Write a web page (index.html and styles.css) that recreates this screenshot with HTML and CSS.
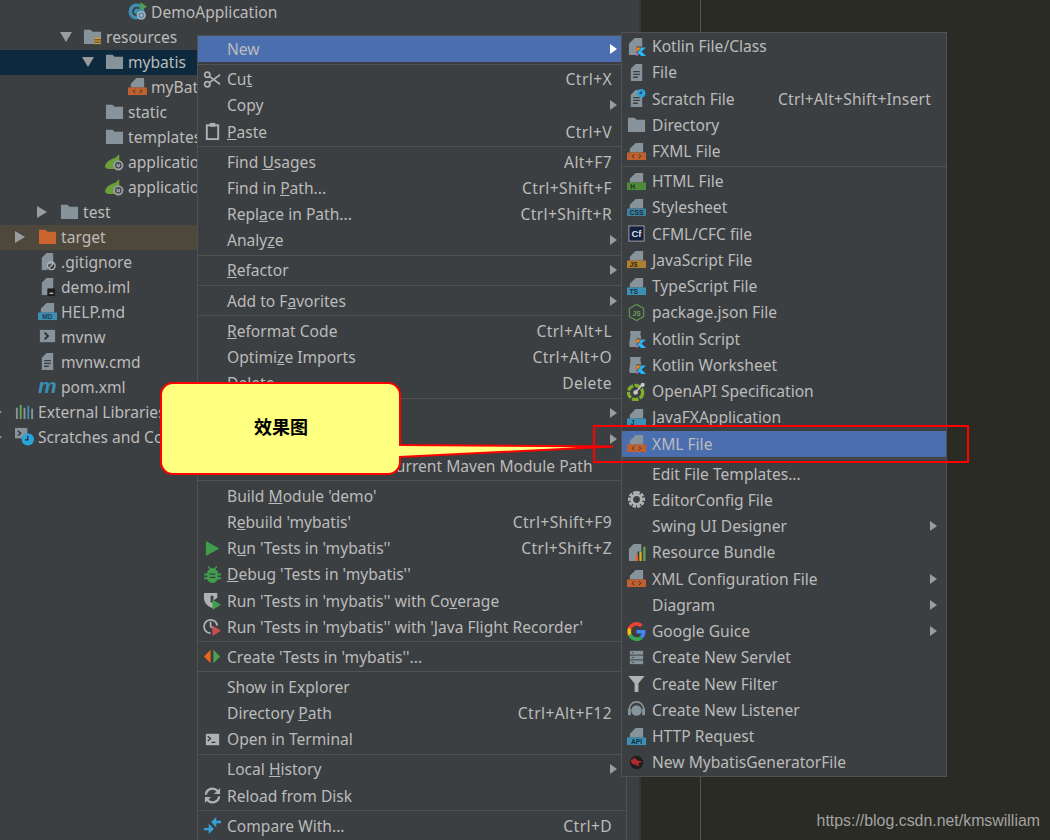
FILE: index.html
```html
<!DOCTYPE html>
<html lang="en">
<head>
    <meta charset="UTF-8">
    <meta name="viewport" content="width=device-width, initial-scale=1.0">
    <title>New XML File</title>
    <link rel="stylesheet" href="styles.css">
</head>
<body>
    <svg class="defs" width="0" height="0">
        <defs>
            <symbol id="folder" viewBox="0 0 20 20"><path fill="#87939a" d="M1 3h7l2 2h9v13H1z"/></symbol>
            <symbol id="page" viewBox="0 0 20 20"><path fill="#87939a" d="M9 1h8v10H3V7z"/></symbol>
            <symbol id="textfile" viewBox="0 0 20 20"><path fill="#87939a" d="M9 1h7v18H4V6z"/><path stroke="#3c3f41" stroke-width="1.400" d="M6.500 9h7M6.500 12h7M6.500 15h5"/></symbol>
            <symbol id="xml" viewBox="0 0 20 20"><use href="#page"/><rect x="0" y="11" width="20" height="8" fill="#c0602f"/><path fill="none" stroke="#2e2e2e" d="M7.500 13l-2 2 2 2M12.500 13l2 2-2 2"/></symbol>
            <symbol id="leaf" viewBox="0 0 20 20"><path fill="#6a9f3a" d="M0 16c0-6 7-9 11-10l4-4v7l-5 9H3z"/><circle cx="14" cy="14" r="5.400" fill="#9a9fa3"/><circle cx="14" cy="14" r="2.800" fill="none" stroke="#3c3f41" stroke-width="1.200"/><path stroke="#3c3f41" d="M14 11v3"/></symbol>
            <symbol id="demo" viewBox="0 0 20 20"><circle cx="9" cy="10" r="8.500" fill="#3d8eb0"/><path fill="none" stroke="#3c3f41" stroke-width="2" d="M12 7a4 4 0 1 0 0 6"/><path fill="#4fa04f" d="M13 0l7 5-7 4z"/><circle cx="14" cy="14" r="4.800" fill="#9ab0bb"/><circle cx="14" cy="14" r="2.400" fill="none" stroke="#3d6f8a"/></symbol>
            <symbol id="ignore" viewBox="0 0 20 20"><path fill="#87939a" d="M9 1h7v12H4V6z"/><path fill="#87939a" d="M4 12h6v7H4z"/><circle cx="14" cy="14.500" r="4" fill="none" stroke="#b5b5b5" stroke-width="1.400"/><path stroke="#b5b5b5" stroke-width="1.400" d="M11.500 17l5-5"/></symbol>
            <symbol id="iml" viewBox="0 0 20 20"><path fill="#87939a" d="M9 1h7v12H4V6z"/><path fill="#87939a" d="M4 12h6v7H4z"/><rect x="10" y="12" width="8" height="8" fill="#1e1e1e"/><rect x="12" y="16.500" width="4" height="1.200" fill="#ddd"/></symbol>
            <symbol id="run" viewBox="0 0 20 20"><path fill="#3f9f4d" d="M3 2l14 8-14 8z"/></symbol>
            <symbol id="kotlin" viewBox="0 0 20 20"><path fill="#87939a" d="M8 1h8v9h-6v9H2V7z"/><path fill="#f88909" d="M10 11h5l-5 5z"/><path fill="#29b6f6" d="M15 11h5l-10 9v-2z"/><path fill="#29b6f6" d="M15 20l-2.500-2.500L15 15l5 5z"/><path fill="#c757bc" d="M10 16l2.500 2.500L10 20z"/></symbol>
            <symbol id="kscript" viewBox="0 0 20 20"><path fill="#87939a" d="M3 2h12c-2 3 0 5 0 8h-5v9H3c-2-4 2-12 0-17z"/><path fill="#f88909" d="M10 11h5l-5 5z"/><path fill="#29b6f6" d="M15 11h5l-10 9v-2z"/><path fill="#29b6f6" d="M15 20l-2.500-2.500L15 15l5 5z"/><path fill="#c757bc" d="M10 16l2.500 2.500L10 20z"/></symbol>
        </defs>
    </svg>

    <div class="window">
        <div class="tree">
            <div class="row lv6"><span class="arrow none"></span><svg class="ic"><use href="#demo"/></svg>DemoApplication</div>
            <div class="row lv3"><span class="arrow down"></span><svg class="ic" viewBox="0 0 20 20"><use href="#folder"/><path fill="#c99d2e" d="M12 11h7v7h-7z"/><path stroke="#3c3f41" d="M12 13.500h7M12 16h7"/></svg>resources</div>
            <div class="row lv5 selected"><span class="arrow down"></span><svg class="ic"><use href="#folder"/></svg>mybatis</div>
            <div class="row lv6"><span class="arrow none"></span><svg class="ic"><use href="#xml"/></svg>myBat</div>
            <div class="row lv5"><span class="arrow none"></span><svg class="ic"><use href="#folder"/></svg>static</div>
            <div class="row lv5"><span class="arrow none"></span><svg class="ic"><use href="#folder"/></svg>templates</div>
            <div class="row lv5"><span class="arrow none"></span><svg class="ic"><use href="#leaf"/></svg>applicatio</div>
            <div class="row lv5"><span class="arrow none"></span><svg class="ic"><use href="#leaf"/></svg>applicatio</div>
            <div class="row lv2"><span class="arrow right"></span><svg class="ic"><use href="#folder"/></svg>test</div>
            <div class="row lv1 excluded"><span class="arrow right"></span><svg class="ic" viewBox="0 0 20 20"><path fill="#c9642e" d="M1 3h7l2 2h9v13H1z"/></svg>target</div>
            <div class="row lv1"><span class="arrow none"></span><svg class="ic"><use href="#ignore"/></svg>.gitignore</div>
            <div class="row lv1"><span class="arrow none"></span><svg class="ic"><use href="#iml"/></svg>demo.iml</div>
            <div class="row lv1"><span class="arrow none"></span><svg class="ic" viewBox="0 0 20 20"><use href="#page"/><rect y="11" width="20" height="8" fill="#3c8fb5"/><text class="badge" x="10" y="18" fill="#1f3d4d">MD</text></svg>HELP.md</div>
            <div class="row lv1"><span class="arrow none"></span><svg class="ic" viewBox="0 0 20 20"><rect x="2" y="3" width="16" height="13" fill="#87939a"/><path fill="none" stroke="#2f3133" stroke-width="2" d="M7 6l3.500 3.500L7 13"/></svg>mvnw</div>
            <div class="row lv1"><span class="arrow none"></span><svg class="ic"><use href="#textfile"/></svg>mvnw.cmd</div>
            <div class="row lv1"><span class="arrow none"></span><span class="ic pom">m</span>pom.xml</div>
            <div class="row lv0"><span class="arrow right"></span><svg class="ic" viewBox="0 0 20 20"><path stroke="#87939a" stroke-width="2" d="M2 6v12M10 6v12"/><path stroke="#6aa84f" stroke-width="2" d="M6 3v15"/><path stroke="#3c8fb5" stroke-width="2" d="M14 4v14"/><path stroke="#87939a" stroke-width="2" d="M18 7v11"/></svg>External Libraries</div>
            <div class="row lv0"><span class="arrow right"></span><svg class="ic" viewBox="0 0 20 20"><rect y="1" width="13" height="11" fill="#87939a"/><path fill="none" stroke="#2f3133" stroke-width="1.300" d="M3 4l3 2.500-3 2.500"/><circle cx="13.500" cy="13" r="6.500" fill="#29a5dc"/><path fill="none" stroke="#1d2b33" stroke-width="1.300" d="M13.500 9.500V13.500h-3"/></svg>Scratches and Co</div>
        </div>
        <div class="gutter"></div>
        <div class="editor"><div class="margin-line"></div></div>
    </div>

    <div class="menu main-menu">
        <div class="item active"><span class="ic"></span><span class="label">New</span><span class="more"></span></div>
        <div class="sep"></div>
        <div class="item"><svg class="ic" viewBox="0 0 20 20"><g fill="none" stroke="#afb1b3" stroke-width="1.800"><circle cx="4.500" cy="5" r="2.800"/><circle cx="4.500" cy="15" r="2.800"/><path d="M7 7l11 8M7 13l11-8"/></g></svg><span class="label">Cu<u>t</u></span><span class="key">Ctrl+X</span></div>
        <div class="item"><span class="ic"></span><span class="label">Copy</span><span class="more"></span></div>
        <div class="item"><svg class="ic" viewBox="0 0 20 20"><rect x="4" y="3.500" width="12" height="14.500" fill="none" stroke="#afb1b3" stroke-width="2"/><rect x="7" y="1" width="6" height="4" fill="#afb1b3"/></svg><span class="label"><u>P</u>aste</span><span class="key">Ctrl+V</span></div>
        <div class="sep"></div>
        <div class="item"><span class="ic"></span><span class="label">Find <u>U</u>sages</span><span class="key">Alt+F7</span></div>
        <div class="item"><span class="ic"></span><span class="label">Find in <u>P</u>ath...</span><span class="key">Ctrl+Shift+F</span></div>
        <div class="item"><span class="ic"></span><span class="label">Repl<u>a</u>ce in Path...</span><span class="key">Ctrl+Shift+R</span></div>
        <div class="item"><span class="ic"></span><span class="label">Analy<u>z</u>e</span><span class="more"></span></div>
        <div class="sep"></div>
        <div class="item"><span class="ic"></span><span class="label"><u>R</u>efactor</span><span class="more"></span></div>
        <div class="sep"></div>
        <div class="item"><span class="ic"></span><span class="label">Add to F<u>a</u>vorites</span><span class="more"></span></div>
        <div class="sep"></div>
        <div class="item"><span class="ic"></span><span class="label"><u>R</u>eformat Code</span><span class="key">Ctrl+Alt+L</span></div>
        <div class="item"><span class="ic"></span><span class="label">Optimi<u>z</u>e Imports</span><span class="key">Ctrl+Alt+O</span></div>
        <div class="item"><span class="ic"></span><span class="label"><u>D</u>elete...</span><span class="key">Delete</span></div>
        <div class="sep"></div>
        <div class="item"><span class="ic"></span><span class="label"></span><span class="more"></span></div>
        <div class="item"><span class="ic"></span><span class="label"></span><span class="more"></span></div>
        <div class="item"><span class="ic"></span><span class="label">Add as Module in the Current Maven Module Path</span></div>
        <div class="sep"></div>
        <div class="item"><span class="ic"></span><span class="label">Build <u>M</u>odule 'demo'</span></div>
        <div class="item"><span class="ic"></span><span class="label">R<u>e</u>build 'mybatis'</span><span class="key">Ctrl+Shift+F9</span></div>
        <div class="item"><svg class="ic"><use href="#run"/></svg><span class="label">R<u>u</u>n 'Tests in 'mybatis''</span><span class="key">Ctrl+Shift+Z</span></div>
        <div class="item"><svg class="ic" viewBox="0 0 20 20"><path fill="#3f9f4d" d="M6 1l2 2.500h4L14 1l1 1-2 2.500 2.500 2V9H19v2h-3.500v2H19v2h-3.500c-1 2.500-3 4-5.500 4s-4.500-1.500-5.500-4H1v-2h3.500v-2H1V9h3.500V6.500l2.500-2L5 2z"/><path stroke="#3c3f41" stroke-width="1.300" d="M7 9.500h6M7 13h6"/></svg><span class="label"><u>D</u>ebug 'Tests in 'mybatis''</span></div>
        <div class="item"><svg class="ic" viewBox="0 0 20 20"><path fill="#afb1b3" d="M1 2h14v5l-4 3v8c-5-1-10-5-10-11z"/><path fill="#3c3f41" d="M8 5h3v7H8z"/><path fill="#3f9f4d" d="M10 9l9 5.500-9 5.500z"/></svg><span class="label">Run 'Tests in 'mybatis'' with Co<u>v</u>erage</span></div>
        <div class="item"><svg class="ic" viewBox="0 0 20 20"><path fill="none" stroke="#afb1b3" stroke-width="1.800" d="M8 17a7 7 0 1 1 7-8M8 5v5l3 2"/><path fill="#c94f4f" d="M10 9l9 5.500-9 5.500z"/></svg><span class="label">Run 'Tests in 'mybatis'' with 'Java Flight Recorder'</span></div>
        <div class="sep"></div>
        <div class="item"><svg class="ic" viewBox="0 0 20 20"><path fill="#e8651f" d="M8 3v14L1 10z"/><path fill="#4fa04f" d="M11 3v14l7-7z"/></svg><span class="label">Create 'Tests in 'mybatis''...</span></div>
        <div class="sep"></div>
        <div class="item"><span class="ic"></span><span class="label">Show in Explorer</span></div>
        <div class="item"><span class="ic"></span><span class="label">Directory <u>P</u>ath</span><span class="key">Ctrl+Alt+F12</span></div>
        <div class="item"><svg class="ic" viewBox="0 0 20 20"><rect x="3" y="4" width="14" height="12" fill="#afb1b3"/><path fill="none" stroke="#2f3133" stroke-width="1.300" d="M5 6.500l3 2.500-3 2.500M9 13h4"/></svg><span class="label">Open in Terminal</span></div>
        <div class="sep"></div>
        <div class="item"><span class="ic"></span><span class="label">Local <u>H</u>istory</span><span class="more"></span></div>
        <div class="item"><svg class="ic" viewBox="0 0 20 20"><g fill="none" stroke="#afb1b3" stroke-width="2.400"><path d="M3 9a7 7 0 0 1 12.500-3.500M17 11a7 7 0 0 1-12.500 3.500"/></g><path fill="#afb1b3" d="M18 2v6.500h-6.500zM2 18v-6.500h6.500z"/></svg><span class="label">Reload from Disk</span></div>
        <div class="sep"></div>
        <div class="item"><svg class="ic" viewBox="0 0 20 20"><path fill="#389fd6" d="M19 5v2.500h-5V12L8.500 6.200 14 1v4zM1 15v-2.500h5V8l5.500 5.800L6 19v-4z"/></svg><span class="label">Compare With...</span><span class="key">Ctrl+D</span></div>
    </div>

    <div class="menu sub-menu">
        <div class="item"><svg class="ic"><use href="#kotlin"/></svg><span class="label">Kotlin File/Class</span></div>
        <div class="item"><svg class="ic"><use href="#textfile"/></svg><span class="label">File</span></div>
        <div class="item"><svg class="ic" viewBox="0 0 20 20"><use href="#textfile"/><circle cx="15" cy="4.500" r="4.500" fill="#29a5dc"/><path fill="none" stroke="#1d2b33" d="M15 2v2.700h-2"/></svg><span class="label">Scratch File</span><span class="key">Ctrl+Alt+Shift+Insert</span></div>
        <div class="item"><svg class="ic"><use href="#folder"/></svg><span class="label">Directory</span></div>
        <div class="item"><svg class="ic"><use href="#xml"/></svg><span class="label">FXML File</span></div>
        <div class="sep"></div>
        <div class="item"><svg class="ic" viewBox="0 0 20 20"><use href="#page"/><rect y="11" width="20" height="8" fill="#4d8a3a"/><text class="badge" x="6" y="18" fill="#1d3317">H</text></svg><span class="label">HTML File</span></div>
        <div class="item"><svg class="ic" viewBox="0 0 20 20"><use href="#page"/><rect y="11" width="20" height="8" fill="#3c7f9e"/><text class="badge" x="10" y="18" fill="#1c2f38">CSS</text></svg><span class="label">Stylesheet</span></div>
        <div class="item"><svg class="ic" viewBox="0 0 20 20"><rect x="2" y="2" width="16" height="16" fill="#14203d" stroke="#9fa4ad" stroke-width="1"/><text class="badge cf" x="10" y="14" fill="#d9dee8">Cf</text></svg><span class="label">CFML/CFC file</span></div>
        <div class="item"><svg class="ic" viewBox="0 0 20 20"><use href="#page"/><rect y="11" width="20" height="8" fill="#ad7f30"/><text class="badge" x="7" y="18" fill="#33260f">JS</text></svg><span class="label">JavaScript File</span></div>
        <div class="item"><svg class="ic" viewBox="0 0 20 20"><use href="#page"/><rect y="11" width="20" height="8" fill="#3c8fb5"/><text class="badge" x="7" y="18" fill="#14303d">TS</text></svg><span class="label">TypeScript File</span></div>
        <div class="item"><svg class="ic" viewBox="0 0 20 20"><path fill="none" stroke="#5f8f4f" stroke-width="1.400" d="M10 1.500l7.500 4.300v8.400L10 18.500l-7.500-4.300V5.800z"/><text class="badge" x="10" y="13.500" fill="#6f9f5f">JS</text></svg><span class="label">package.json File</span></div>
        <div class="item"><svg class="ic"><use href="#kscript"/></svg><span class="label">Kotlin Script</span></div>
        <div class="item"><svg class="ic"><use href="#kscript"/></svg><span class="label">Kotlin Worksheet</span></div>
        <div class="item"><svg class="ic" viewBox="0 0 20 20"><circle cx="9" cy="11" r="7.500" fill="none" stroke="#7fae2c" stroke-width="3.500" stroke-dasharray="7 1.500"/><path stroke="#c9c9c9" stroke-width="1.600" d="M9 11l7-8"/><circle cx="9" cy="11" r="2.400" fill="#c9c9c9"/><circle cx="16.500" cy="3" r="2.200" fill="#c9c9c9"/></svg><span class="label">OpenAPI Specification</span></div>
        <div class="item"><svg class="ic" viewBox="0 0 20 20"><use href="#page"/><rect y="11" width="20" height="8" fill="#3c8fb5"/><text class="badge" x="6" y="18" fill="#14303d">J</text></svg><span class="label">JavaFXApplication</span></div>
        <div class="item active"><svg class="ic"><use href="#xml"/></svg><span class="label">XML File</span></div>
        <div class="sep"></div>
        <div class="item"><span class="ic"></span><span class="label">Edit File Templates...</span></div>
        <div class="item"><svg class="ic" viewBox="0 0 20 20"><path fill="none" stroke="#afb1b3" stroke-width="3" stroke-dasharray="3.500 1.300" d="M10 2.500a7.500 7.500 0 1 1 0 15 7.500 7.500 0 0 1 0-15z"/><circle cx="10" cy="10" r="5" fill="none" stroke="#afb1b3" stroke-width="2.800"/></svg><span class="label">EditorConfig File</span></div>
        <div class="item"><span class="ic"></span><span class="label">Swing UI Designer</span><span class="more"></span></div>
        <div class="item"><svg class="ic" viewBox="0 0 20 20"><path fill="#87939a" d="M7 1h8v8h-4v10H2V6z"/><path fill="#e8651f" d="M9 13h2.500v6H9z"/><path fill="#d9a72c" d="M13 9h2.500v10H13z"/><path fill="#5fa04f" d="M17 4h2.500v15H17z"/></svg><span class="label">Resource Bundle</span></div>
        <div class="item"><svg class="ic"><use href="#xml"/></svg><span class="label">XML Configuration File</span><span class="more"></span></div>
        <div class="item"><span class="ic"></span><span class="label">Diagram</span><span class="more"></span></div>
        <div class="item"><svg class="ic" viewBox="0 0 20 20"><path fill="#4285f4" d="M19.500 10.200c0-.7-.1-1.300-.2-1.900H10v3.700h5.300c-.2 1.200-.9 2.200-2 2.900l3.100 2.400c1.900-1.700 3.100-4.200 3.100-7.100z"/><path fill="#34a853" d="M10 20c2.700 0 4.900-.9 6.400-2.400l-3.100-2.400c-.9.600-2 .9-3.300.9-2.500 0-4.700-1.700-5.400-4L1.400 14.500C3 17.800 6.200 20 10 20z"/><path fill="#fbbc05" d="M4.600 12.100c-.4-1.300-.4-2.800 0-4.100L1.400 5.500c-1.300 2.700-1.300 6.200 0 9z"/><path fill="#ea4335" d="M10 4c1.400 0 2.700.5 3.700 1.400l2.800-2.800C14.800 1 12.500 0 10 0 6.200 0 3 2.200 1.400 5.500L4.600 8c.7-2.300 2.900-4 5.400-4z"/></svg><span class="label">Google Guice</span><span class="more"></span></div>
        <div class="item"><svg class="ic" viewBox="0 0 20 20"><g fill="#87939a"><rect x="3" y="3" width="14" height="4"/><rect x="3" y="8" width="14" height="4"/><rect x="3" y="13" width="14" height="4"/></g><path stroke="#3c3f41" d="M5 5h2M5 10h2M5 15h2"/></svg><span class="label">Create New Servlet</span></div>
        <div class="item"><svg class="ic" viewBox="0 0 20 20"><path fill="#afb1b3" d="M1.500 2h17L12 10v9H8v-9z"/></svg><span class="label">Create New Filter</span></div>
        <div class="item"><svg class="ic" viewBox="0 0 20 20"><circle cx="10" cy="11" r="5.500" fill="#87939a"/><path fill="none" stroke="#87939a" stroke-width="1.800" d="M2.500 12V9.500a7.500 7.500 0 0 1 15 0V12"/><rect x="1" y="9" width="3" height="7" fill="#87939a"/><rect x="16" y="9" width="3" height="7" fill="#87939a"/></svg><span class="label">Create New Listener</span></div>
        <div class="item"><svg class="ic" viewBox="0 0 20 20"><use href="#page"/><rect y="11" width="20" height="8" fill="#3c8fb5"/><text class="badge" x="10" y="18" fill="#10293a">API</text></svg><span class="label">HTTP Request</span></div>
        <div class="item"><svg class="ic" viewBox="0 0 20 20"><circle cx="10" cy="10" r="7" fill="#1e1e1e"/><path fill="#b22a2a" d="M4 8l4-3 3 3 5 1-4 2 1 3-5-2-3-1z"/></svg><span class="label">New MybatisGeneratorFile</span></div>
    </div>

    <svg class="callout" width="470" height="100" viewBox="0 0 470 100">
        <path fill="#ffff80" stroke="#ff0000" stroke-width="2" d="M13 2H228a12 12 0 0 1 12 12V64L453 65.500 240 76V81a12 12 0 0 1-12 12H13A12 12 0 0 1 1 81V14A12 12 0 0 1 13 2z"/>
    </svg>
    <div class="callout-text">效果图</div>
    <div class="focus-box"></div>
    <div class="watermark">https://blog.csdn.net/kmswilliam</div>
</body>
</html>
```

FILE: styles.css
```css
* {
    box-sizing: border-box;
}

html, body {
    margin: 0;
    height: 100%;
    overflow: hidden;
}

body {
    font-family: 'Noto Sans', sans-serif;
    font-size: 15.6px;
    color: #bbbbbb;
    background-color: #3c3f41;
}

.defs {
    position: absolute;
}

.window {
    display: flex;
    height: 840px;
}

.tree {
    width: 639px;
    overflow: hidden;
    background-color: #3c3f41;
}

.gutter {
    width: 2px;
    background-color: #333537;
}

.editor {
    flex: 1;
    padding-left: 59px;
    background-color: #2b2b25;
}

.margin-line {
    width: 1px;
    height: 100%;
    background-color: #55554f;
}

.row {
    display: flex;
    align-items: center;
    height: 25px;
    margin-left: -8px;
    padding-bottom: 2px;
    white-space: nowrap;
}

.row.selected {
    background-color: #0d293e;
}

.row.excluded {
    background-color: #4e473c;
}

.lv0 { padding-left: 0; }
.lv1 { padding-left: 23px; }
.lv2 { padding-left: 45px; }
.lv3 { padding-left: 68px; }
.lv5 { padding-left: 90px; }
.lv6 { padding-left: 113px; }

.row .ic {
    margin-right: 4px;
}

.row .arrow {
    width: 23px;
    flex: none;
    display: flex;
    align-items: center;
}

.arrow.none {
    visibility: hidden;
}

.arrow.right::before {
    content: "";
    border-left: 10px solid #9a9c9e;
    border-top: 6px solid transparent;
    border-bottom: 6px solid transparent;
}

.arrow.down::before {
    content: "";
    border-top: 10px solid #9a9c9e;
    border-left: 6px solid transparent;
    border-right: 6px solid transparent;
}

.ic {
    display: block;
    width: 19px;
    height: 19px;
    flex: none;
}

.pom {
    font-family: 'Liberation Sans', sans-serif;
    font-size: 21px;
    font-weight: bold;
    font-style: italic;
    line-height: 17px;
    color: #3a8fb5;
}

.badge {
    font-family: 'Liberation Sans', sans-serif;
    font-size: 7px;
    font-weight: bold;
    text-anchor: middle;
}

.badge.cf {
    font-size: 10px;
}

.menu {
    position: absolute;
    background-color: #3c3f41;
    border: 1px solid #515151;
    white-space: nowrap;
}

.main-menu {
    left: 197px;
    top: 35px;
    width: 430px;
    height: 810px;
}

.sub-menu {
    left: 621px;
    top: 32px;
    width: 326px;
    height: 745px;
}

.item {
    display: flex;
    align-items: center;
    height: 26.25px;
    padding: 0 9px 0 5px;
}

.item.active {
    background-color: #4b6eaf;
}

.item .label {
    flex: 1;
    margin-left: 5px;
}

.sub-menu .label {
    margin-left: 6px;
}

.item .key {
    margin-right: 6px;
    letter-spacing: 0.2px;
}

.main-menu .key {
    margin-right: 5px;
    letter-spacing: 0.4px;
}

.item .more {
    border-left: 7px solid #9a9c9e;
    border-top: 5px solid transparent;
    border-bottom: 5px solid transparent;
}

.item.active .more {
    border-left-color: #ffffff;
}

.sep {
    height: 1px;
    margin: 1.4px 0;
    background-color: #515151;
}

.callout {
    position: absolute;
    left: 160px;
    top: 381px;
}

.callout-text {
    position: absolute;
    left: 161px;
    top: 380px;
    width: 240px;
    height: 92px;
    display: flex;
    align-items: center;
    justify-content: center;
    font-family: 'Noto Sans CJK SC', sans-serif;
    font-size: 18px;
    font-weight: bold;
    color: #000000;
}

.focus-box {
    position: absolute;
    left: 593px;
    top: 425px;
    width: 376px;
    height: 38px;
    border: 2px solid #ff0000;
}

.watermark {
    position: absolute;
    right: 10px;
    top: 812px;
    font-family: 'Liberation Sans', sans-serif;
    font-size: 15.9px;
    color: #a3a3a3;
}
```
